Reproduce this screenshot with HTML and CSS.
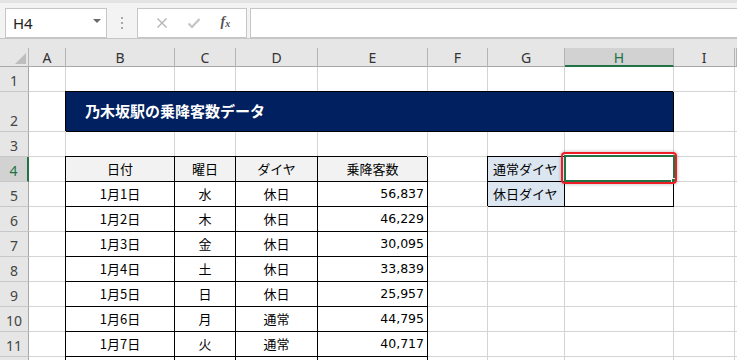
FILE: index.html
```html
<!DOCTYPE html>
<html lang="ja">
<head>
    <meta charset="UTF-8">
    <meta name="viewport" content="width=device-width, initial-scale=1.0">
    <title>乃木坂駅の乗降客数データ</title>
    <link rel="stylesheet" href="styles.css">
</head>
<body>
    <div id="app">
        <div id="fbar">
            <div class="namebox">
                <span>H4</span>
                <span class="arrow"></span>
            </div>
            <div class="grip"><i></i><i></i><i></i></div>
            <div class="fbtns">
                <svg width="12" height="12" viewBox="0 0 12 12"><path d="M1.5 1.5l9 9M10.5 1.5l-9 9" stroke="#b4b4b4" stroke-width="1.4" fill="none"/></svg>
                <svg width="14" height="12" viewBox="0 0 14 12"><path d="M1.5 6.5l3.5 3.5 7.5-8" stroke="#c4c4c4" stroke-width="2.2" fill="none"/></svg>
                <span class="fx">f<sub>x</sub></span>
            </div>
            <div class="finput"></div>
        </div>

        <div id="colhead">
            <div class="corner"><span class="tri"></span></div>
            <div class="ch">A</div>
            <div class="ch">B</div>
            <div class="ch">C</div>
            <div class="ch">D</div>
            <div class="ch">E</div>
            <div class="ch">F</div>
            <div class="ch">G</div>
            <div class="ch sel">H</div>
            <div class="ch">I</div>
            <div class="ch"></div>
        </div>

        <div id="sheet">
            <!-- row 1 -->
            <div class="cell rh">1</div>
            <div class="cell"></div><div class="cell"></div><div class="cell"></div><div class="cell"></div><div class="cell"></div>
            <div class="cell"></div><div class="cell"></div><div class="cell"></div><div class="cell"></div><div class="cell"></div>

            <!-- row 2 -->
            <div class="cell rh">2</div>
            <div class="cell"></div>
            <div class="cell title">乃木坂駅の乗降客数データ</div>
            <div class="cell"></div><div class="cell"></div>

            <!-- row 3 -->
            <div class="cell rh">3</div>
            <div class="cell"></div><div class="cell"></div><div class="cell"></div><div class="cell"></div><div class="cell"></div>
            <div class="cell"></div><div class="cell"></div><div class="cell"></div><div class="cell"></div><div class="cell"></div>

            <!-- row 4 -->
            <div class="cell rh sel">4</div>
            <div class="cell"></div>
            <div class="cell t th c">日付</div>
            <div class="cell t th c">曜日</div>
            <div class="cell t th c">ダイヤ</div>
            <div class="cell t th c">乗降客数</div>
            <div class="cell"></div>
            <div class="cell t lbl">通常ダイヤ</div>
            <div class="cell t active">
                <span class="selbox"><span class="handle"></span></span>
                <span class="mark"></span>
            </div>
            <div class="cell"></div><div class="cell"></div>

            <!-- row 5 -->
            <div class="cell rh">5</div>
            <div class="cell"></div>
            <div class="cell t c">1月1日</div>
            <div class="cell t c">水</div>
            <div class="cell t c">休日</div>
            <div class="cell t r">56,837</div>
            <div class="cell"></div>
            <div class="cell t lbl">休日ダイヤ</div>
            <div class="cell t"></div>
            <div class="cell"></div><div class="cell"></div>

            <!-- row 6 -->
            <div class="cell rh">6</div>
            <div class="cell"></div>
            <div class="cell t c">1月2日</div>
            <div class="cell t c">木</div>
            <div class="cell t c">休日</div>
            <div class="cell t r">46,229</div>
            <div class="cell"></div><div class="cell"></div><div class="cell"></div><div class="cell"></div><div class="cell"></div>

            <!-- row 7 -->
            <div class="cell rh">7</div>
            <div class="cell"></div>
            <div class="cell t c">1月3日</div>
            <div class="cell t c">金</div>
            <div class="cell t c">休日</div>
            <div class="cell t r">30,095</div>
            <div class="cell"></div><div class="cell"></div><div class="cell"></div><div class="cell"></div><div class="cell"></div>

            <!-- row 8 -->
            <div class="cell rh">8</div>
            <div class="cell"></div>
            <div class="cell t c">1月4日</div>
            <div class="cell t c">土</div>
            <div class="cell t c">休日</div>
            <div class="cell t r">33,839</div>
            <div class="cell"></div><div class="cell"></div><div class="cell"></div><div class="cell"></div><div class="cell"></div>

            <!-- row 9 -->
            <div class="cell rh">9</div>
            <div class="cell"></div>
            <div class="cell t c">1月5日</div>
            <div class="cell t c">日</div>
            <div class="cell t c">休日</div>
            <div class="cell t r">25,957</div>
            <div class="cell"></div><div class="cell"></div><div class="cell"></div><div class="cell"></div><div class="cell"></div>

            <!-- row 10 -->
            <div class="cell rh">10</div>
            <div class="cell"></div>
            <div class="cell t c">1月6日</div>
            <div class="cell t c">月</div>
            <div class="cell t c">通常</div>
            <div class="cell t r">44,795</div>
            <div class="cell"></div><div class="cell"></div><div class="cell"></div><div class="cell"></div><div class="cell"></div>

            <!-- row 11 -->
            <div class="cell rh">11</div>
            <div class="cell"></div>
            <div class="cell t c">1月7日</div>
            <div class="cell t c">火</div>
            <div class="cell t c">通常</div>
            <div class="cell t r">40,717</div>
            <div class="cell"></div><div class="cell"></div><div class="cell"></div><div class="cell"></div><div class="cell"></div>

            <!-- row 12 (only its top edge is on screen) -->
            <div class="cell rh"></div>
            <div class="cell"></div>
            <div class="cell t"></div>
            <div class="cell t"></div>
            <div class="cell t"></div>
            <div class="cell t"></div>
            <div class="cell"></div><div class="cell"></div><div class="cell"></div><div class="cell"></div><div class="cell"></div>
        </div>
    </div>
</body>
</html>
```

FILE: styles.css
```css
body {
    margin: 0;
    padding: 0;
    background-color: #fff;
    overflow: hidden;
}

* {
    box-sizing: border-box;
}

#app {
    width: 737px;
    height: 360px;
    overflow: hidden;
    font-family: "Noto Sans", sans-serif;
}

/* formula bar */

#fbar {
    display: flex;
    align-items: flex-start;
    height: 39px;
    padding-top: 8px;
    border-bottom: 1px solid #c6c6c6;
    background: linear-gradient(#e3e3e3 0, #e3e3e3 3px, #f3f3f3 3px);
}

.namebox {
    display: flex;
    align-items: center;
    justify-content: space-between;
    width: 102px;
    height: 30px;
    margin-left: 5px;
    padding: 0 5px 0 7px;
    background-color: #fff;
    border: 1px solid #c6c6c6;
    font-size: 15px;
    color: #222;
}

.namebox .arrow {
    width: 0;
    height: 0;
    border-left: 4px solid transparent;
    border-right: 4px solid transparent;
    border-top: 4px solid #6a6a6a;
    margin-top: -4px;
}

.grip {
    display: flex;
    flex-direction: column;
    align-items: center;
    gap: 3px;
    width: 30px;
    padding-top: 9px;
}

.grip i {
    width: 2px;
    height: 2px;
    background-color: #a8a8a8;
}

.fbtns {
    display: flex;
    align-items: center;
    justify-content: space-around;
    width: 110px;
    height: 30px;
    padding: 0 6px 0 8px;
    background-color: #fff;
    border: 1px solid #c6c6c6;
}

.fbtns .fx {
    font-family: "Liberation Serif", serif;
    font-style: italic;
    font-weight: bold;
    font-size: 14px;
    color: #555;
    margin-top: -3px;
}

.fbtns .fx sub {
    font-size: 10px;
    vertical-align: -1px;
}

.finput {
    flex: 1;
    height: 30px;
    margin-left: 3px;
    margin-right: -3px;
    background-color: #fff;
    border: 1px solid #c6c6c6;
}

/* column headers */

#colhead, #sheet {
    display: grid;
    grid-template-columns: 29px 37px 109px 61px 82px 110px 60px 77px 109px 61px 1fr;
}

#colhead {
    padding-top: 9px;
    background-color: #e6e6e6;
}

#colhead .corner, #colhead .ch {
    position: relative;
    height: 19px;
    border-right: 1px solid #b4b4b4;
    border-bottom: 1px solid #a8a8a8;
}

#colhead .ch {
    display: flex;
    justify-content: center;
    align-items: center;
    font-size: 14px;
    color: #333;
    padding-top: 1px;
}

#colhead .ch.sel {
    background-color: #d2d2d2;
    color: #217346;
    border-bottom: 2px solid #217346;
    padding-top: 2px;
}

.corner .tri {
    position: absolute;
    right: 2px;
    bottom: 2px;
    width: 0;
    height: 0;
    border-left: 11px solid transparent;
    border-bottom: 11px solid #bdbdbd;
}

/* sheet */

#sheet {
    grid-template-rows: 25px 40px repeat(10, 25px);
}

.cell {
    display: flex;
    align-items: center;
    min-width: 0;
    padding: 0 3px 2px;
    overflow: hidden;
    white-space: nowrap;
    border-right: 1px solid #d4d4d4;
    border-bottom: 1px solid #d4d4d4;
    font-family: "Noto Sans CJK JP", sans-serif;
    font-size: 13px;
    color: #000;
}

.cell.rh {
    justify-content: center;
    align-items: flex-end;
    padding: 0 0 1px;
    background-color: #e6e6e6;
    border-right-color: #a8a8a8;
    border-bottom-color: #c8c8c8;
    font-family: "Noto Sans", sans-serif;
    font-size: 14px;
    line-height: 18px;
    color: #444;
}

.cell.rh.sel {
    background-color: #d2d2d2;
    color: #217346;
    border-right: 2px solid #217346;
}

.cell.t {
    border-right-color: #000;
    border-bottom-color: #000;
    box-shadow: -1px -1px 0 #000;
}

.cell.th {
    background-color: #f2f2f2;
}

.cell.lbl {
    background-color: #dce6f1;
    padding-left: 5px;
}

.cell.c {
    justify-content: center;
}

.cell.r {
    justify-content: flex-end;
    font-family: "DejaVu Sans", sans-serif;
    font-size: 12.5px;
}

.cell.title {
    grid-column: span 7;
    padding: 0 0 3px 19px;
    background-color: #002060;
    border-right-color: #000;
    border-bottom-color: #000;
    box-shadow: -1px -1px 0 #000;
    color: #fff;
    font-size: 15px;
    font-weight: bold;
}

/* selected cell + red annotation */

.cell.active {
    position: relative;
    overflow: visible;
}

.selbox {
    position: absolute;
    left: -1px;
    top: -2px;
    right: -2px;
    bottom: -1px;
    border: 2px solid #217346;
}

.selbox .handle {
    position: absolute;
    right: -4px;
    bottom: -4px;
    width: 6px;
    height: 6px;
    background-color: #217346;
    border: 1px solid #fff;
}

.mark {
    position: absolute;
    left: -4px;
    top: -5px;
    right: -4px;
    bottom: -3px;
    border: 2px solid #ee1c24;
    border-radius: 4px;
    box-shadow: 0 0 3px 1px rgba(0, 0, 0, 0.18);
}
```
